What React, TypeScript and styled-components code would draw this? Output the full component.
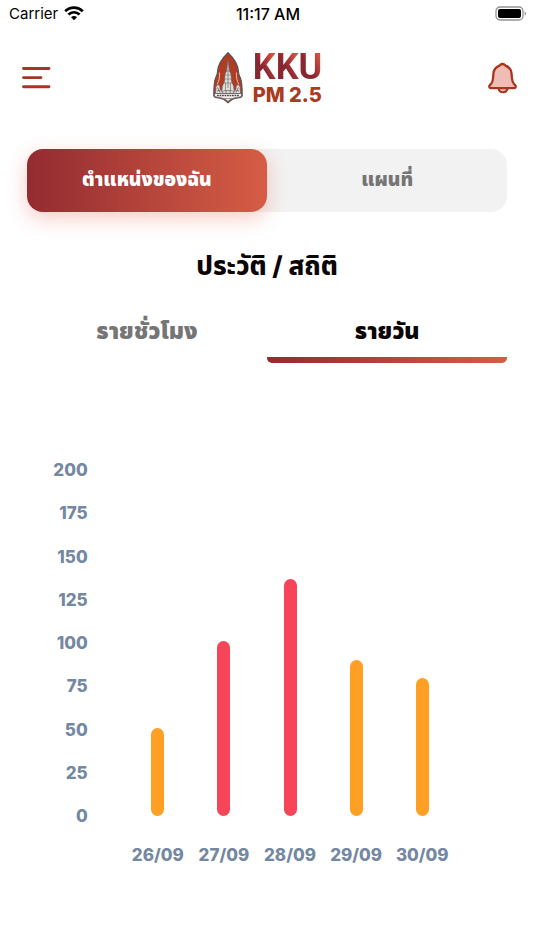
import React, { useState } from 'react';
import styled, { createGlobalStyle, css } from 'styled-components';

const GlobalStyle = createGlobalStyle`
  *, *::before, *::after { box-sizing: border-box; }
  body {
    margin: 0;
    background: #fff;
    color: #0b0606;
    font-family: Inter, 'Noto Sans Thai', 'Noto Sans', 'Liberation Sans', sans-serif;
  }
  button { font: inherit; border: 0; background: none; padding: 0; cursor: pointer; }
`;

const gradient = 'linear-gradient(90deg, #932b31 0%, #d65d45 100%)';

const Screen = styled.div`
  min-height: 100vh;
  display: flex;
  flex-direction: column;
  background: #fff;
`;

const StatusBar = styled.div`
  display: grid;
  grid-template-columns: 1fr auto 1fr;
  align-items: center;
  height: 27px;
  padding: 0 7px 0 9px;
  font-size: 15px;
  color: #000;
`;

const Carrier = styled.span`
  display: flex;
  align-items: center;
  gap: 6px;
`;

const Clock = styled.time`
  font-size: 16px;
  font-weight: 500;
`;

const Battery = styled.svg`
  justify-self: end;
`;

const Header = styled.header`
  display: grid;
  grid-template-columns: 1fr auto 1fr;
  align-items: center;
  height: 101px;
  padding: 0 16px 0 22px;
`;

const IconButton = styled.button<{ $end?: boolean }>`
  display: flex;
  justify-self: ${({ $end }) => ($end ? 'end' : 'start')};
`;

const Brand = styled.div`
  display: flex;
  align-items: center;
  gap: 10px;
  padding-right: 5px;
`;

const BrandText = styled.div`
  display: flex;
  flex-direction: column;
  padding-top: 3px;
`;

const BrandName = styled.span`
  display: flex;
  font-family: Roboto, sans-serif;
  font-size: 36px;
  line-height: 32px;
  font-weight: 700;
`;

const BrandLetter = styled.span`
  background: linear-gradient(60deg, #8a2630 45%, #d0503f 85%);
  background-clip: text;
  -webkit-background-clip: text;
  color: transparent;
`;

const BrandUnit = styled.span`
  font-size: 20px;
  line-height: 24px;
  font-weight: 800;
  color: #ab3a22;
`;

const Content = styled.main`
  display: flex;
  flex-direction: column;
  padding: 21px 5% 0;
`;

const Segments = styled.div`
  display: grid;
  grid-template-columns: 1fr 1fr;
  border-radius: 16px;
  background: #f2f2f2;
`;

const Segment = styled.button<{ $active: boolean }>`
  height: 63px;
  border-radius: 16px;
  font-size: 19px;
  font-weight: 900;
  color: #757575;
  ${({ $active }) =>
    $active &&
    css`
      color: #fff;
      background: ${gradient};
      box-shadow: 0 6px 20px rgba(224, 80, 60, 0.3);
    `}
`;

const Title = styled.h1`
  margin: 36px 0 0;
  text-align: center;
  font-size: 26px;
  line-height: 36px;
  font-weight: 800;
`;

const Tabs = styled.div`
  display: grid;
  grid-template-columns: 1fr 1fr;
  margin-top: 29px;
`;

const Tab = styled.button<{ $active: boolean }>`
  display: flex;
  flex-direction: column;
  gap: 8px;
  font-size: 23px;
  line-height: 36px;
  font-weight: 900;
  text-align: center;
  color: ${({ $active }) => ($active ? '#0b0606' : '#757575')};
  &::after {
    content: '';
    width: 100%;
    height: 6px;
    border-radius: 0 0 5px 5px;
    background: ${({ $active }) => ($active ? gradient : 'transparent')};
  }
`;

const TabLabel = styled.span`
  width: 100%;
`;

const Chart = styled.section`
  display: grid;
  grid-template-columns: 61px 1fr;
  column-gap: 37px;
  row-gap: 15px;
  margin-top: 95px;
  padding-right: 52px;
  font-size: 17px;
  line-height: 24px;
  font-weight: 800;
  color: #7488a2;
`;

const Scale = styled.div`
  display: flex;
  flex-direction: column;
  justify-content: space-between;
  height: 370px;
  text-align: right;
`;

const Plot = styled.div`
  display: grid;
  grid-template-columns: repeat(5, 1fr);
  align-items: end;
  justify-items: center;
  padding: 12px 0;
`;

const Bar = styled.div<{ $high: boolean }>`
  width: 13px;
  border-radius: 7px;
  background: ${({ $high }) => ($high ? '#f64458' : '#ffa024')};
`;

const Dates = styled.div`
  grid-column: 2;
  display: grid;
  grid-template-columns: repeat(5, 1fr);
  text-align: center;
`;

const MAX = 200;
const TICKS = [200, 175, 150, 125, 100, 75, 50, 25, 0];
const READINGS = [
  { date: '26/09', value: 51 },
  { date: '27/09', value: 101 },
  { date: '28/09', value: 137 },
  { date: '29/09', value: 90 },
  { date: '30/09', value: 80 },
];

const WifiIcon = () => (
  <svg width="20" height="15" viewBox="0 0 20 15" aria-hidden="true">
    <g fill="none" stroke="#000" strokeWidth="2.7">
      <path d="M1.2 5.2C6.2.5 13.8.5 18.8 5.2" />
      <path d="M4.4 8.6c3.3-3 7.9-3 11.2 0" />
    </g>
    <path d="M7 11.3c1.8-1.6 4.2-1.6 6 0l-3 3z" fill="#000" />
  </svg>
);

const BatteryIcon = () => (
  <Battery width="32" height="15" viewBox="0 0 32 15" role="img" aria-label="Battery full">
    <rect x="1" y="1" width="27" height="13" rx="4" fill="none" stroke="#929292" strokeWidth="1.3" />
    <rect x="3" y="3" width="23" height="9" rx="2" fill="#000" />
    <path d="M29.7 5.3c1.8.8 1.8 3.6 0 4.4z" fill="#929292" />
  </Battery>
);

const MenuIcon = () => (
  <svg width="29" height="24" viewBox="0 0 29 24" aria-hidden="true">
    <path d="M1.5 2.5h25.5M1.5 11.6h17.5M1.5 20.8h25.5" stroke="#a93520" strokeWidth="2.9" strokeLinecap="round" />
  </svg>
);

const BellIcon = () => (
  <svg width="30" height="32" viewBox="0 0 30 32" aria-hidden="true">
    <path d="M10.500 26.500c1 5 8 5 9 0" fill="#efbdb4" stroke="#a93520" strokeWidth="2" />
    <path
      d="M14.500 2c-1.500 0-2.200 1-3 1.600C7 5.200 5.600 8.500 5.400 12c-.3 6.500-.8 8.500-3.600 11.200-.9 1-.8 3 1 3h23.400c1.800 0 1.900-2 1-3-2.800-2.700-3.300-4.700-3.600-11.200-.2-3.500-1.600-6.800-6.100-8.400C16.700 3 16 2 14.500 2z"
      fill="#efbdb4"
      stroke="#a93520"
      strokeWidth="2.3"
      strokeLinejoin="round"
    />
  </svg>
);

const Emblem = () => (
  <svg width="30" height="52" viewBox="0 0 30 52" aria-hidden="true">
    <path
      d="M15 .8C10 5.500 5 12 4.600 19.500c-.1 2.500-.8 3.800-1.800 6C1 29.500.8 35 .8 43.500c0 1.800 1.700 2.300 5 2.500 4 .3 6.500 2.300 9.200 4.800 2.700-2.500 5.200-4.500 9.200-4.800 3.300-.2 5-.7 5-2.500 0-8.500-.2-14-2-18-1-2.200-1.700-3.500-1.800-6C25 12 20 5.500 15 .8z"
      fill="#b23b24"
      stroke="#555"
      strokeWidth="1.2"
    />
    <path d="M6.500 20.500c.3 5.500-.4 8-2.300 12M23.500 20.500c-.3 5.500.4 8 2.300 12" fill="none" stroke="#e3dcd9" strokeWidth=".8" />
    <path d="M15 7l.8 6 .7 6 1.500 3 .7 8 2 4 .8 8h-13l.8-8 2-4 .7-8 1.500-3 .7-6z" fill="#e0dcda" stroke="#5f5856" strokeWidth=".7" />
    <path d="M15 10v26M13 19h4M12 23h6M11.500 27h7M10.500 31h9M12.500 31v9M17.500 31v9" stroke="#797371" strokeWidth=".7" />
    <path d="M2.200 42l.8-5-.3-2 2.300-2.500 1.800 1.500.2 3 2.500 2.500 2.500-1h6l2.500 1 2.500-2.500.2-3 1.800-1.500 2.300 2.500-.3 2 .8 5z" fill="#dedad8" stroke="#655e5c" strokeWidth=".6" />
    <path d="M4.500 35.500l2.500 5M25.500 35.500l-2.500 5M4 39l4-1 2 4M26 39l-4-1-2 4M13 38v4M17 38v4" fill="none" stroke="#6d6664" strokeWidth=".8" />
    <path d="M1.500 41.500h27v3c-4 1.500-9 .5-13.500 5-4.500-4.500-9.500-3.500-13.500-5z" fill="#f4f2f1" stroke="#5e5755" strokeWidth=".8" />
    <path d="M4 43.500h22" stroke="#4f4947" strokeWidth="1.5" strokeDasharray="1.8 .7" />
    <path d="M10 46.500h10" stroke="#88807d" strokeWidth=".8" />
  </svg>
);

export default function App() {
  const [view, setView] = useState<'location' | 'map'>('location');
  const [period, setPeriod] = useState<'hourly' | 'daily'>('daily');

  return (
    <Screen lang="th">
      <GlobalStyle />
      <StatusBar>
        <Carrier>
          Carrier
          <WifiIcon />
        </Carrier>
        <Clock>11:17 AM</Clock>
        <BatteryIcon />
      </StatusBar>
      <Header>
        <IconButton aria-label="เมนู">
          <MenuIcon />
        </IconButton>
        <Brand>
          <Emblem />
          <BrandText>
            <BrandName>
              <BrandLetter>K</BrandLetter>
              <BrandLetter>K</BrandLetter>
              <BrandLetter>U</BrandLetter>
            </BrandName>
            <BrandUnit>PM 2.5</BrandUnit>
          </BrandText>
        </Brand>
        <IconButton $end aria-label="การแจ้งเตือน">
          <BellIcon />
        </IconButton>
      </Header>
      <Content>
        <Segments>
          <Segment $active={view === 'location'} onClick={() => setView('location')}>
            ตำแหน่งของฉัน
          </Segment>
          <Segment $active={view === 'map'} onClick={() => setView('map')}>
            แผนที่
          </Segment>
        </Segments>
        <Title>ประวัติ / สถิติ</Title>
        <Tabs role="tablist">
          <Tab role="tab" aria-selected={period === 'hourly'} $active={period === 'hourly'} onClick={() => setPeriod('hourly')}>
            <TabLabel>รายชั่วโมง</TabLabel>
          </Tab>
          <Tab role="tab" aria-selected={period === 'daily'} $active={period === 'daily'} onClick={() => setPeriod('daily')}>
            <TabLabel>รายวัน</TabLabel>
          </Tab>
        </Tabs>
        <Chart aria-label="PM 2.5">
          <Scale>
            {TICKS.map((tick) => (
              <span key={tick}>{tick}</span>
            ))}
          </Scale>
          <Plot>
            {READINGS.map(({ date, value }) => (
              <Bar key={date} $high={value > 100} style={{ height: `${(value / MAX) * 100}%` }} />
            ))}
          </Plot>
          <Dates>
            {READINGS.map(({ date }) => (
              <span key={date}>{date}</span>
            ))}
          </Dates>
        </Chart>
      </Content>
    </Screen>
  );
}
